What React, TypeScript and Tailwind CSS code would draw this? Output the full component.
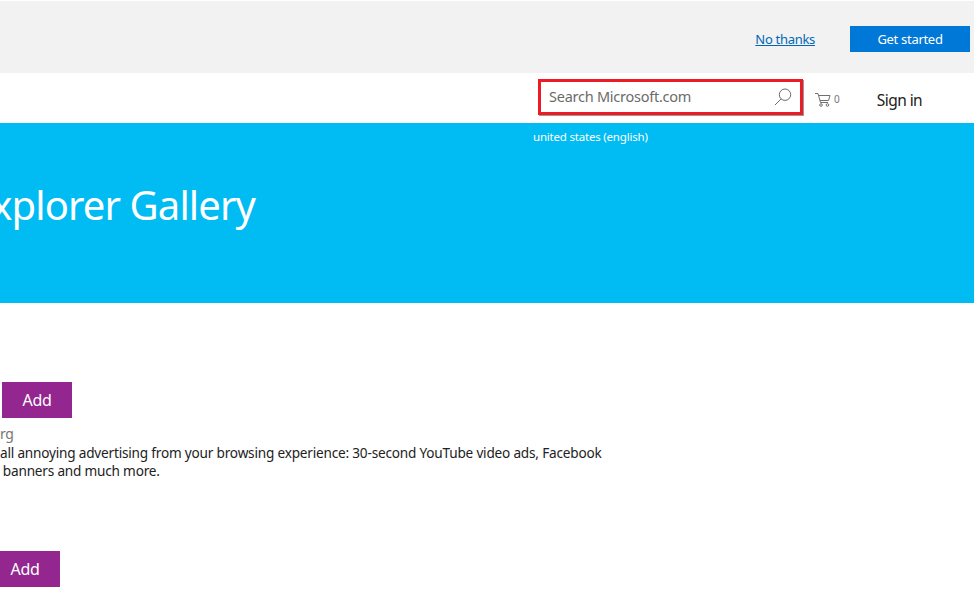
const FONT = "font-['Noto_Sans','Open_Sans',sans-serif]"

function SearchIcon() {
  return (
    <svg width="18" height="18" viewBox="0 0 18 18" fill="none" stroke="#6b6b6b" strokeWidth="1">
      <circle cx="11" cy="6.7" r="5.7" />
      <path d="M7 11 L1 17" />
    </svg>
  )
}

function CartIcon() {
  return (
    <svg width="16" height="14" viewBox="0 0 16 14" fill="none" stroke="#707070" strokeWidth="1">
      <path d="M0 .5 H3 L5.5 9.5 H13" />
      <path d="M3.5 2.5 H15 L13.5 7.5 H5" />
      <circle cx="6" cy="12" r="1.3" />
      <circle cx="12.5" cy="12" r="1.3" />
    </svg>
  )
}

export default function App() {
  return (
    <div className={`${FONT} w-[974px] h-[613px] overflow-hidden bg-white`}>
      {/* promo bar */}
      <div className="mt-px h-[72px] bg-[#f2f2f2] flex items-start justify-end pt-[25px] pr-[4px]">
        <a className="text-[13px] leading-[26px] text-[#0067b8] underline mr-[35px] tracking-[-0.3px]">No thanks</a>
        <button className="w-[120px] h-[26px] pt-px bg-[#0078d7] text-white text-[13px] tracking-[-0.3px]">Get started</button>
      </div>

      {/* nav */}
      <div className="h-[50px] flex items-start pl-[538px]">
        <div className="mt-[6px] w-[265px] h-[36px] border-[3px] border-[#ed1c24] shadow-[1px_1px_0_#999] flex items-center justify-between pl-[8px] pr-[8px]">
          <span className="text-[14.5px] text-[#6b6b6b] tracking-[-0.25px]">Search Microsoft.com</span>
          <SearchIcon />
        </div>
        <div className="ml-[12px] mt-[19px] flex items-center gap-[3px] text-[#777]">
          <CartIcon />
          <span className="text-[10px]">0</span>
        </div>
        <span className="ml-[37px] mt-[15px] text-[15.5px] leading-[24px] text-[#222] tracking-[-0.55px]">Sign in</span>
      </div>

      {/* hero */}
      <div className="h-[180px] bg-[#00bcf2] text-white overflow-hidden">
        <div className="pl-[533px] pt-[6px] text-[11.5px] leading-[16px] tracking-[-0.2px]">united states (english)</div>
        <h1 className="mt-[34px] -ml-[30px] text-[40px] leading-[52px] whitespace-nowrap tracking-[-0.9px]">Explorer Gallery</h1>
      </div>

      {/* results */}
      <div className="overflow-hidden">
        <button className="mt-[79px] ml-[2px] block w-[70px] h-[36px] bg-[#93278f] text-white text-[16px] tracking-[-0.3px]">Add</button>
        <div className="mt-[7px] -ml-[88px] text-[14px] leading-[18px] text-[#767676] tracking-[-0.25px]">adblockplus.org</div>
        <p className="mt-px ml-0 w-[640px] text-[13.6px] leading-[18px] text-[#222] tracking-[-0.195px]">
          <span className="block whitespace-nowrap">all annoying advertising from your browsing experience: 30-second YouTube video ads, Facebook</span>
          <span className="block whitespace-nowrap -ml-[37px]">flashy banners and much more.</span>
        </p>
        <button className="mt-[71px] -ml-[10px] block w-[70px] h-[36px] bg-[#93278f] text-white text-[16px] tracking-[-0.3px]">Add</button>
      </div>
    </div>
  )
}
